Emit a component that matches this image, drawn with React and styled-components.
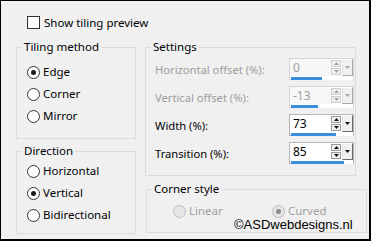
import React from "react";
import styled, { createGlobalStyle } from "styled-components";

const Global = createGlobalStyle`
  html, body { margin: 0; padding: 0; background: #f0f0f0; }
  body { font-family: "Noto Sans", "Open Sans", sans-serif; font-size: 11px; color: #000; }
  * { box-sizing: border-box; }
`;

const Page = styled.div`
  position: relative;
  width: 371px;
  height: 241px;
  border-style: solid;
  border-color: #000;
  border-width: 1px 2px 2px 1px;
  background: #f0f0f0;
  padding: 15px 0 0 15px;
  display: flex;
  flex-direction: column;
  overflow: hidden;
`;

const CheckRow = styled.label`
  display: flex;
  align-items: center;
  gap: 4px;
  height: 13px;
  margin-left: 11px;
  line-height: 13px;
  font-size: 11.5px;
`;

const CheckBox = styled.span`
  width: 13px;
  height: 13px;
  border: 1px solid #333;
  background: #fff;
  flex: none;
`;

const Columns = styled.div`
  display: flex;
  gap: 9px;
  margin-top: 10px;
  align-items: flex-start;
`;

const Column = styled.div`
  display: flex;
  flex-direction: column;
  gap: ${(p) => p.$gap}px;
  width: ${(p) => p.$w}px;
  flex: none;
`;

const Group = styled.fieldset`
  margin: 0 0 0 ${(p) => p.$ml || 0}px;
  padding: ${(p) => p.$pt}px ${(p) => p.$pr || 0}px ${(p) => p.$pb}px ${(p) => p.$pl}px;
  border: 1px solid #dcdcdc;
  min-width: 0;
  width: ${(p) => p.$w}px;
  display: flex;
  flex-direction: column;
  gap: ${(p) => p.$gap || 0}px;
`;

const Legend = styled.legend`
  margin-left: ${(p) => 5 - (p.$pl || 0)}px;
  padding: 0 2px;
  line-height: 16px;
  font-size: 11.5px;
  color: #000;
`;

const RadioRow = styled.label`
  display: flex;
  align-items: center;
  gap: 3px;
  height: ${(p) => p.$h || 22}px;
  width: ${(p) => (p.$w ? `${p.$w}px` : "auto")};
  font-size: 11.5px;
  line-height: 14px;
  color: ${(p) => (p.$disabled ? "#a0a0a0" : "#000")};
`;

const Circle = styled.span`
  width: 13px;
  height: 13px;
  border-radius: 50%;
  border: 1px solid ${(p) => (p.$disabled ? "#bcbcbc" : "#333")};
  background: ${(p) => (p.$disabled ? "#e6e6e6" : "#fff")};
  display: flex;
  align-items: center;
  justify-content: center;
  flex: none;
`;

const Dot = styled.span`
  width: 5px;
  height: 5px;
  border-radius: 50%;
  background: ${(p) => (p.$disabled ? "#8a8a8a" : "#1a1a1a")};
`;

const OptionLine = styled.div`
  display: flex;
`;

const SettingRow = styled.div`
  display: grid;
  grid-template-columns: 1fr 65px;
  align-items: center;
  height: 22px;
  font-size: 11.2px;
  color: ${(p) => (p.$disabled ? "#9d9d9d" : "#000")};
`;

const Spin = styled.div`
  height: 22px;
  border: 1px solid ${(p) => (p.$disabled ? "#d6d6d6" : "#b4b4b4")};
  background: #fff;
  display: flex;
  flex-direction: column;
`;

const SpinTop = styled.div`
  display: flex;
  height: 17px;
`;

const Field = styled.div`
  flex: 1;
  padding-left: 3px;
  line-height: 18px;
  font-size: 12px;
  background: ${(p) => (p.$disabled ? "#f7f7f7" : "#fff")};
  color: ${(p) => (p.$disabled ? "#9d9d9d" : "#000")};
`;

const Arrows = styled.div`
  width: 10px;
  display: flex;
  flex-direction: column;
  gap: 1px;
  padding: 1px 0;
  background: #fff;
`;

const ArrowBtn = styled.div`
  flex: 1;
  border: 1px solid ${(p) => (p.$disabled ? "#cfcfcf" : "#9a9a9a")};
  background: #f0f0f0;
  display: flex;
  align-items: center;
  justify-content: center;
`;

const DropBtn = styled.div`
  width: 11px;
  margin-left: 1px;
  background: #f0f0f0;
  border-style: solid;
  border-width: 1px;
  border-color: #fff ${(p) => (p.$disabled ? "#a8a8a8" : "#6a6a6a")}
    ${(p) => (p.$disabled ? "#a8a8a8" : "#6a6a6a")} #e3e3e3;
  display: flex;
  align-items: center;
  justify-content: center;
`;

const Track = styled.div`
  height: 3px;
  margin: 1px 0 0 1px;
  background: #fff;
`;

const Fill = styled.div`
  height: 3px;
  background: #3b8ede;
`;

const Copyright = styled.div`
  position: absolute;
  left: 233px;
  top: 217px;
  font-family: "Liberation Sans", Arial, sans-serif;
  font-size: 13px;
  line-height: 13px;
  color: #000;
`;

const Tri = ({ up, color }) => (
  <svg width="5" height="3" viewBox="0 0 5 3">
    <path d={up ? "M0 3 L2.5 0 L5 3 Z" : "M0 0 L5 0 L2.5 3 Z"} fill={color} />
  </svg>
);

function Radio({ label, checked, disabled, w }) {
  return (
    <RadioRow $disabled={disabled} $w={w}>
      <Circle $disabled={disabled}>{checked && <Dot $disabled={disabled} />}</Circle>
      {label}
    </RadioRow>
  );
}

function SpinBox({ value, min, max, disabled }) {
  const pct = ((value - min) / (max - min)) * 100;
  const c = disabled ? "#a6a6a6" : "#111";
  return (
    <Spin $disabled={disabled}>
      <SpinTop>
        <Field $disabled={disabled}>{value}</Field>
        <Arrows>
          <ArrowBtn $disabled={disabled}>
            <Tri up color={c} />
          </ArrowBtn>
          <ArrowBtn $disabled={disabled}>
            <Tri color={c} />
          </ArrowBtn>
        </Arrows>
        <DropBtn $disabled={disabled}>
          <Tri color={c} />
        </DropBtn>
      </SpinTop>
      <Track>
        <Fill style={{ width: `${pct}%` }} />
      </Track>
    </Spin>
  );
}

const settings = [
  { label: "Horizontal offset (%):", value: 0, min: -100, max: 100, disabled: true },
  { label: "Vertical offset (%):", value: -13, min: -100, max: 100, disabled: true },
  { label: "Width (%):", value: 73, min: 0, max: 100 },
  { label: "Transition (%):", value: 85, min: 0, max: 100 },
];

export default function App() {
  return (
    <>
      <Global />
      <Page>
        <CheckRow>
          <CheckBox />
          <span>Show tiling preview</span>
        </CheckRow>
        <Columns>
          <Column $w={120} $gap={4}>
            <Group $w={120} $pt={6} $pb={11} $pl={10}>
              <Legend $pl={10}>Tiling method</Legend>
              <Radio label="Edge" checked />
              <Radio label="Corner" />
              <Radio label="Mirror" />
            </Group>
            <Group $w={120} $pt={1} $pb={7} $pl={10}>
              <Legend $pl={10}>Direction</Legend>
              <Radio label="Horizontal" />
              <Radio label="Vertical" checked />
              <Radio label="Bidirectional" />
            </Group>
          </Column>
          <Column $w={222} $gap={5}>
            <Group $w={211} $pt={3} $pb={11} $pl={9} $pr={1} $gap={6}>
              <Legend $pl={9}>Settings</Legend>
              {settings.map((s) => (
                <SettingRow key={s.label} $disabled={s.disabled}>
                  <span>{s.label}</span>
                  <SpinBox {...s} />
                </SettingRow>
              ))}
            </Group>
            <Group $w={221} $ml={1} $pt={3} $pb={10} $pl={26}>
              <Legend $pl={26}>Corner style</Legend>
              <OptionLine>
                <Radio label="Linear" disabled w={99} />
                <Radio label="Curved" checked disabled />
              </OptionLine>
            </Group>
          </Column>
        </Columns>
        <Copyright>©ASDwebdesigns.nl</Copyright>
      </Page>
    </>
  );
}
